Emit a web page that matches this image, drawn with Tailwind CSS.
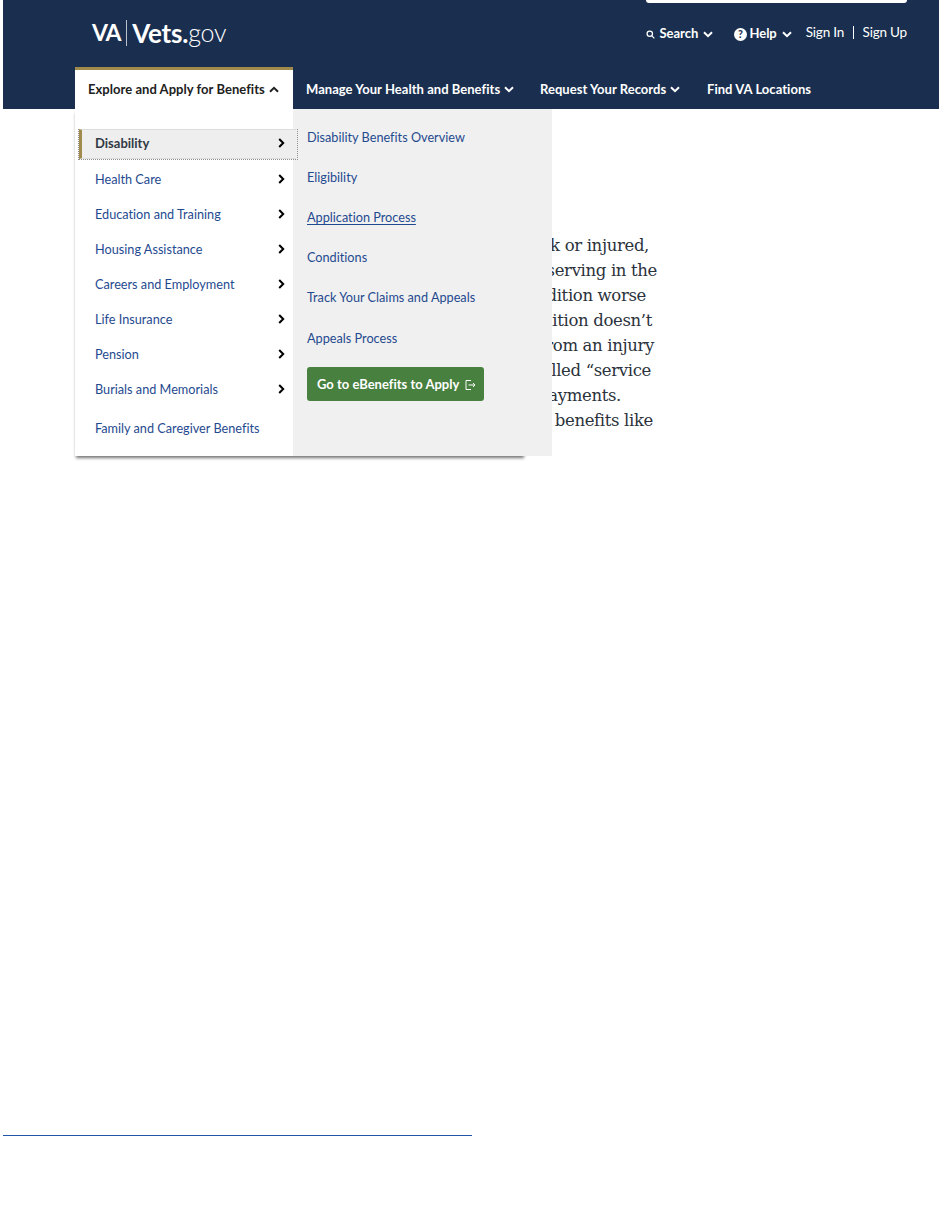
<!DOCTYPE html>
<html><head><meta charset="utf-8"><script src="https://cdn.jsdelivr.net/npm/@tailwindcss/browser@4"></script></head>
<body class="bg-white">
<div class="w-[940px] h-[1216px] overflow-hidden pl-[3px] font-['Lato','Noto_Sans',sans-serif] [font-variant-ligatures:none]">
  <header class="w-[936px] h-[109px] bg-[#1a2f50] flex flex-col text-white">
    <div class="h-[67px] relative flex justify-between pl-[89px] pr-[32px]">
      <div class="absolute left-[643px] top-0 w-[261px] h-[3px] bg-white rounded-b-[3px]"></div>
      <div class="flex items-center h-[67px] leading-none font-bold pb-[2px]">
        <span class="text-[23px] tracking-[-1.2px]">VA</span><span class="w-px h-[26px] bg-white/70 ml-[6px] mr-[5px]"></span><span class="text-[26px] tracking-[-0.2px]">Vets.</span><span class="text-[25px] font-light tracking-[-0.3px]">gov</span>
      </div>
      <div class="flex items-start pt-[24px] h-[67px] text-[14px]">
        <div class="flex items-center font-bold text-[13px] h-[18px] mt-[1px]">
          <svg class="w-[9px] h-[9px] mr-[4px]" viewBox="0 0 10 10" fill="none" stroke="white" stroke-width="1.4"><circle cx="4.2" cy="4.2" r="3"/><path d="M6.5 6.5 9.3 9.3"/></svg>
          Search
          <svg class="w-[10px] h-[7px] ml-[5px]" viewBox="0 0 10 7" fill="none" stroke="white" stroke-width="2"><path d="M1 1.2 5 5.2 9 1.2"/></svg>
        </div>
        <div class="flex items-center font-bold text-[13px] h-[18px] mt-[1px] ml-[21px]">
          <svg class="w-[13px] h-[13px] mr-[2px]" viewBox="0 0 13 13"><circle cx="6.5" cy="6.5" r="6.5" fill="white"/><text x="6.5" y="10.3" text-anchor="middle" font-size="10.5" font-weight="900" fill="#1a2f50">?</text></svg>
          Help
          <svg class="w-[10px] h-[7px] ml-[5px]" viewBox="0 0 10 7" fill="none" stroke="white" stroke-width="2"><path d="M1 1.2 5 5.2 9 1.2"/></svg>
        </div>
        <div class="ml-[14px] flex items-center h-[16px] text-[13.5px] tracking-[-0.2px]">Sign In<span class="w-[1.5px] h-[13px] bg-white mx-[8.5px]"></span>Sign Up</div>
      </div>
    </div>
    <nav class="h-[42px] relative pl-[72px] flex text-[13px] font-bold tracking-[0.04px]">
      <div class="w-[218px] h-[42px] bg-white border-t-[3px] border-[#a08b4c] text-[#212121] flex items-center pl-[13px]">
        <span class="whitespace-nowrap">Explore and Apply for Benefits</span>
        <svg class="w-[10px] h-[7px] ml-[4px]" viewBox="0 0 10 7" fill="none" stroke="#212121" stroke-width="2"><path d="M1 5.8 5 1.8 9 5.8"/></svg>
      </div>
      <div class="w-[234px] flex items-center pl-[13px] pt-[3px] whitespace-nowrap">Manage Your Health and Benefits
        <svg class="w-[10px] h-[7px] ml-[4px]" viewBox="0 0 10 7" fill="none" stroke="white" stroke-width="2"><path d="M1 1.2 5 5.2 9 1.2"/></svg></div>
      <div class="w-[167px] flex items-center pl-[13px] pt-[3px] whitespace-nowrap">Request Your Records
        <svg class="w-[10px] h-[7px] ml-[4px]" viewBox="0 0 10 7" fill="none" stroke="white" stroke-width="2"><path d="M1 1.2 5 5.2 9 1.2"/></svg></div>
      <div class="flex items-center pl-[13px] pt-[3px] whitespace-nowrap">Find VA Locations</div>

      <div class="absolute left-[72px] top-[42px] w-[450px] h-[347px] bg-white shadow-[0_3px_3px_-1px_rgba(0,0,0,0.55)] z-10 text-[12.7px] font-normal tracking-normal text-[#1f4a8f]">
        <div class="flex flex-col pt-[20px] w-[218px]">
          <div class="relative h-[30px] ml-[4px] w-[217px] bg-[#eeeeee] border-l-[3px] border-[#a08b4c] border-t border-t-[#dddddd] border-b border-b-[#dddddd] flex items-center justify-between pl-[13px] pr-[10px] text-[13px] font-bold text-[#323a45] z-10">Disability
            <svg class="w-[7px] h-[10px] mr-[1px] -translate-y-px" viewBox="0 0 7 10" fill="none" stroke="#000" stroke-width="2"><path d="M1.2 1 5.2 5 1.2 9"/></svg>
            <div class="absolute -left-[4px] -top-px -right-[2px] -bottom-[2px] border-l border-r border-b border-dotted border-[#8f8f8f]"></div></div>
          <div class="h-[35px] mt-[3px] flex items-center justify-between pl-[20px] pr-[7px]">Health Care<svg class="w-[7px] h-[10px] mr-[1px] -translate-y-px" viewBox="0 0 7 10" fill="none" stroke="#000" stroke-width="2"><path d="M1.2 1 5.2 5 1.2 9"/></svg></div>
          <div class="h-[35px] flex items-center justify-between pl-[20px] pr-[7px]">Education and Training<svg class="w-[7px] h-[10px] mr-[1px] -translate-y-px" viewBox="0 0 7 10" fill="none" stroke="#000" stroke-width="2"><path d="M1.2 1 5.2 5 1.2 9"/></svg></div>
          <div class="h-[35px] flex items-center justify-between pl-[20px] pr-[7px]">Housing Assistance<svg class="w-[7px] h-[10px] mr-[1px] -translate-y-px" viewBox="0 0 7 10" fill="none" stroke="#000" stroke-width="2"><path d="M1.2 1 5.2 5 1.2 9"/></svg></div>
          <div class="h-[35px] flex items-center justify-between pl-[20px] pr-[7px]">Careers and Employment<svg class="w-[7px] h-[10px] mr-[1px] -translate-y-px" viewBox="0 0 7 10" fill="none" stroke="#000" stroke-width="2"><path d="M1.2 1 5.2 5 1.2 9"/></svg></div>
          <div class="h-[35px] flex items-center justify-between pl-[20px] pr-[7px]">Life Insurance<svg class="w-[7px] h-[10px] mr-[1px] -translate-y-px" viewBox="0 0 7 10" fill="none" stroke="#000" stroke-width="2"><path d="M1.2 1 5.2 5 1.2 9"/></svg></div>
          <div class="h-[35px] flex items-center justify-between pl-[20px] pr-[7px]">Pension<svg class="w-[7px] h-[10px] mr-[1px] -translate-y-px" viewBox="0 0 7 10" fill="none" stroke="#000" stroke-width="2"><path d="M1.2 1 5.2 5 1.2 9"/></svg></div>
          <div class="h-[35px] flex items-center justify-between pl-[20px] pr-[7px]">Burials and Memorials<svg class="w-[7px] h-[10px] mr-[1px] -translate-y-px" viewBox="0 0 7 10" fill="none" stroke="#000" stroke-width="2"><path d="M1.2 1 5.2 5 1.2 9"/></svg></div>
          <div class="h-[35px] mt-[4px] flex items-center pl-[20px]">Family and Caregiver Benefits</div>
        </div>
        <div class="absolute left-[218px] top-0 w-[259px] h-[347px] bg-[#f0f0f0] pl-[14px] pt-[8.5px] flex flex-col items-start">
          <div class="h-[40px] flex items-center">Disability Benefits Overview</div>
          <div class="h-[40px] flex items-center">Eligibility</div>
          <div class="h-[40px] flex items-center underline underline-offset-[2px]">Application Process</div>
          <div class="h-[40px] flex items-center">Conditions</div>
          <div class="h-[40.5px] flex items-center">Track Your Claims and Appeals</div>
          <div class="h-[40.5px] flex items-center">Appeals Process</div>
          <div class="mt-[8.5px] w-[177px] h-[34px] rounded-[3px] bg-[#47803f] text-white text-[13px] font-bold flex items-center pl-[10px] pt-[1px] whitespace-nowrap">Go to eBenefits to Apply
            <svg class="w-[11px] h-[10px] ml-[6px]" viewBox="0 0 11 10" fill="none" stroke="white" stroke-width="1"><path d="M6 .5H1V9.5H6M3.5 5H10M8 3 10 5 8 7"/></svg></div>
        </div>
      </div>
    </nav>
  </header>
  <main class="h-[1107px] flex flex-col">
    <div class="mt-[124px] font-['DejaVu_Serif',serif] text-[16.5px] leading-[25px] text-[#2b323c] tracking-[-0.35px]">
      <div class="w-[646px] flex justify-end whitespace-nowrap">sick or injured,</div>
      <div class="w-[654px] flex justify-end whitespace-nowrap">while serving in the</div>
      <div class="w-[643px] flex justify-end whitespace-nowrap">condition worse</div>
      <div class="w-[649px] flex justify-end whitespace-nowrap">condition doesn’t</div>
      <div class="w-[651px] flex justify-end whitespace-nowrap">from an injury</div>
      <div class="w-[648px] flex justify-end whitespace-nowrap">called “service</div>
      <div class="w-[618px] flex justify-end whitespace-nowrap">payments.</div>
      <div class="w-[650px] flex justify-end whitespace-nowrap">benefits like</div>
    </div>
    <div class="mt-[702px] w-[469px] h-px shrink-0 bg-[#2055a8]"></div>
  </main>
</div>
</body></html>
